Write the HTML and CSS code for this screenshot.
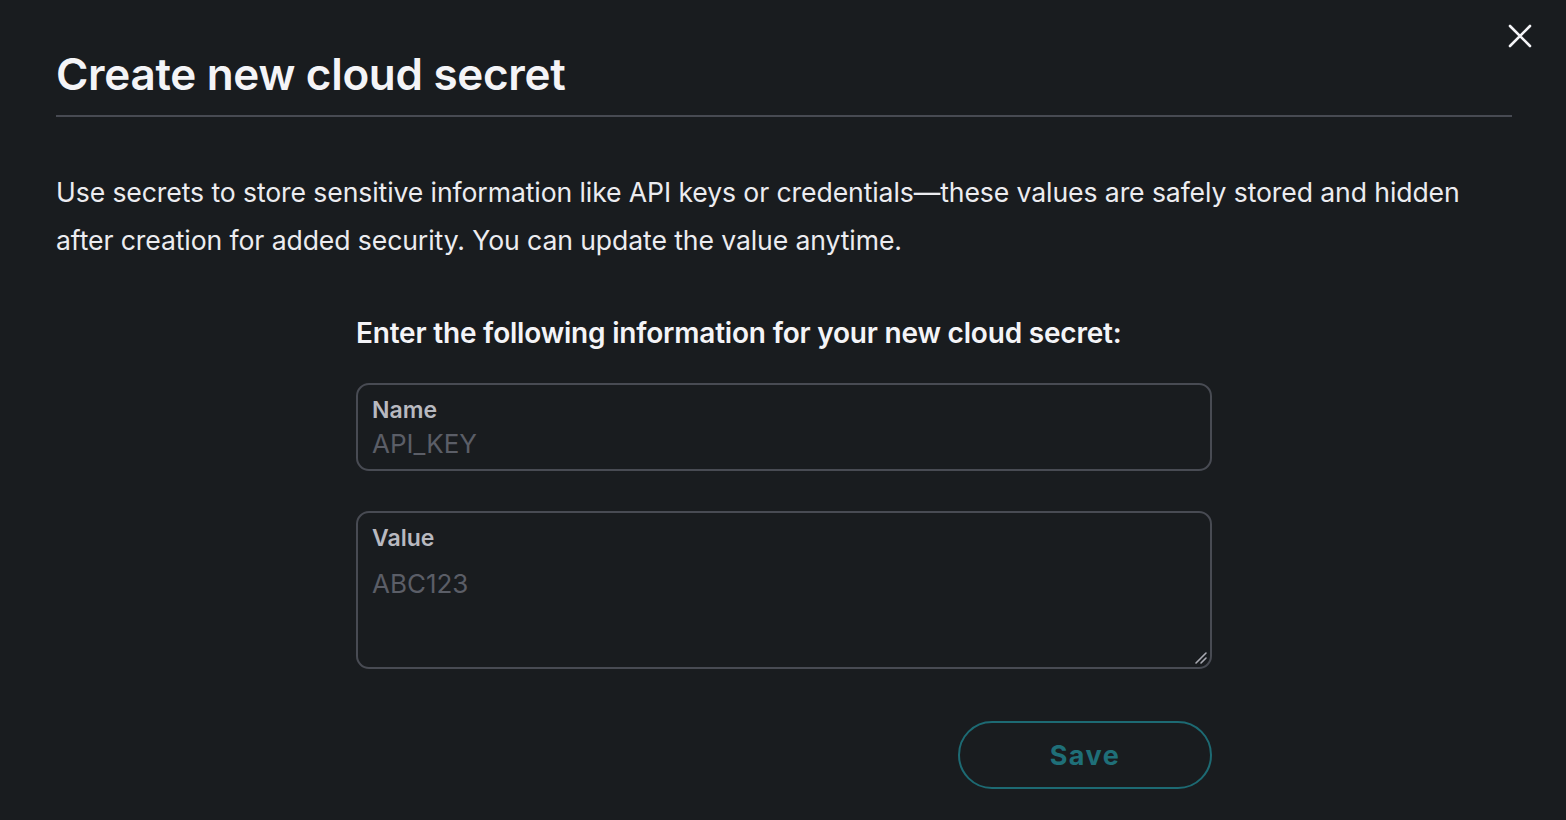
FILE: index.html
```html
<!DOCTYPE html>
<html>
<head>
<meta charset="utf-8">
<link rel="stylesheet" href="styles.css">
</head>
<body>
<div class="modal">
  <button class="close" aria-label="Close">
    <svg width="24" height="24" viewBox="0 0 24 24"><path d="M2 2 L22 22 M22 2 L2 22" stroke="#f4f4f7" stroke-width="2.6" stroke-linecap="round"/></svg>
  </button>
  <h1 class="title">Create new cloud secret</h1>
  <hr class="divider">
  <p class="intro">Use secrets to store sensitive information like API keys or credentials—these values are safely stored and hidden after creation for added security. You can update the value anytime.</p>
  <form class="form">
    <h2 class="form-heading">Enter the following information for your new cloud secret:</h2>
    <label class="field">
      <span class="field-label">Name</span>
      <input class="field-input" type="text" placeholder="API_KEY">
    </label>
    <label class="field field-area">
      <span class="field-label">Value</span>
      <textarea class="field-textarea" placeholder="ABC123"></textarea>
      <svg class="grip" width="14" height="14" viewBox="0 0 14 14"><path d="M2 12 L12 2 M7 12 L12 7" stroke="#a9aab2" stroke-width="1.6" stroke-linecap="round"/></svg>
    </label>
    <div class="actions">
      <button type="button" class="save">Save</button>
    </div>
  </form>
</div>
</body>
</html>
```
FILE: styles.css
```css
html, body {
  margin: 0;
  padding: 0;
  background: #191c1f;
  font-family: Inter, "Noto Sans", sans-serif;
  color: #f4f4f7;
}
.modal {
  position: relative;
  width: 1566px;
  height: 820px;
  box-sizing: border-box;
  padding: 46px 54px 0 56px;
}
.close {
  position: absolute;
  top: 24px;
  right: 34px;
  background: none;
  border: none;
  padding: 0;
  width: 24px;
  height: 24px;
  cursor: pointer;
}
.title {
  margin: 0;
  font-size: 44px;
  font-weight: 600;
  line-height: 56px;
  letter-spacing: -0.3px;
}
.divider {
  margin: 13px 0 0 0;
  border: none;
  height: 2px;
  background: #474a52;
}
.intro {
  max-width: 1430px;
  margin: 51px 0 0 0;
  font-size: 26.6px;
  line-height: 48px;
  font-weight: 400;
  color: #ececf0;
  letter-spacing: -0.1px;
}
.form {
  width: 856px;
  margin: 50px 0 0 300px;
  display: flex;
  flex-direction: column;
}
.form-heading {
  margin: 0 0 31px 0;
  font-size: 28px;
  font-weight: 600;
  line-height: 38px;
  letter-spacing: -0.2px;
}
.field {
  position: relative;
  display: flex;
  flex-direction: column;
  border: 2px solid #484b53;
  border-radius: 13px;
  padding: 11px 14px 7px 14px;
  margin-bottom: 40px;
}
.field-area {
  height: 158px;
  box-sizing: border-box;
  margin-bottom: 52px;
}
.field-label {
  font-size: 23px;
  font-weight: 600;
  color: #b8b9c0;
  line-height: 28px;
}
.field-input, .field-textarea {
  background: transparent;
  border: none;
  outline: none;
  padding: 0;
  font-family: inherit;
  font-size: 26px;
  color: #e0e0e5;
  line-height: 36px;
  resize: none;
}
.field-input {
  margin-top: 2px;
}
.field-textarea {
  margin-top: 14px;
  flex: 1;
}
.field-input::placeholder, .field-textarea::placeholder {
  color: #5b5e67;
}
.grip {
  position: absolute;
  right: 2px;
  bottom: 2px;
}
.actions {
  display: flex;
  justify-content: flex-end;
}
.save {
  width: 254px;
  height: 68px;
  border: 2px solid #1d6a73;
  border-radius: 34px;
  background: transparent;
  color: #1f6f78;
  font-family: inherit;
  font-size: 27px;
  font-weight: 700;
  letter-spacing: 1.5px;
}
```
